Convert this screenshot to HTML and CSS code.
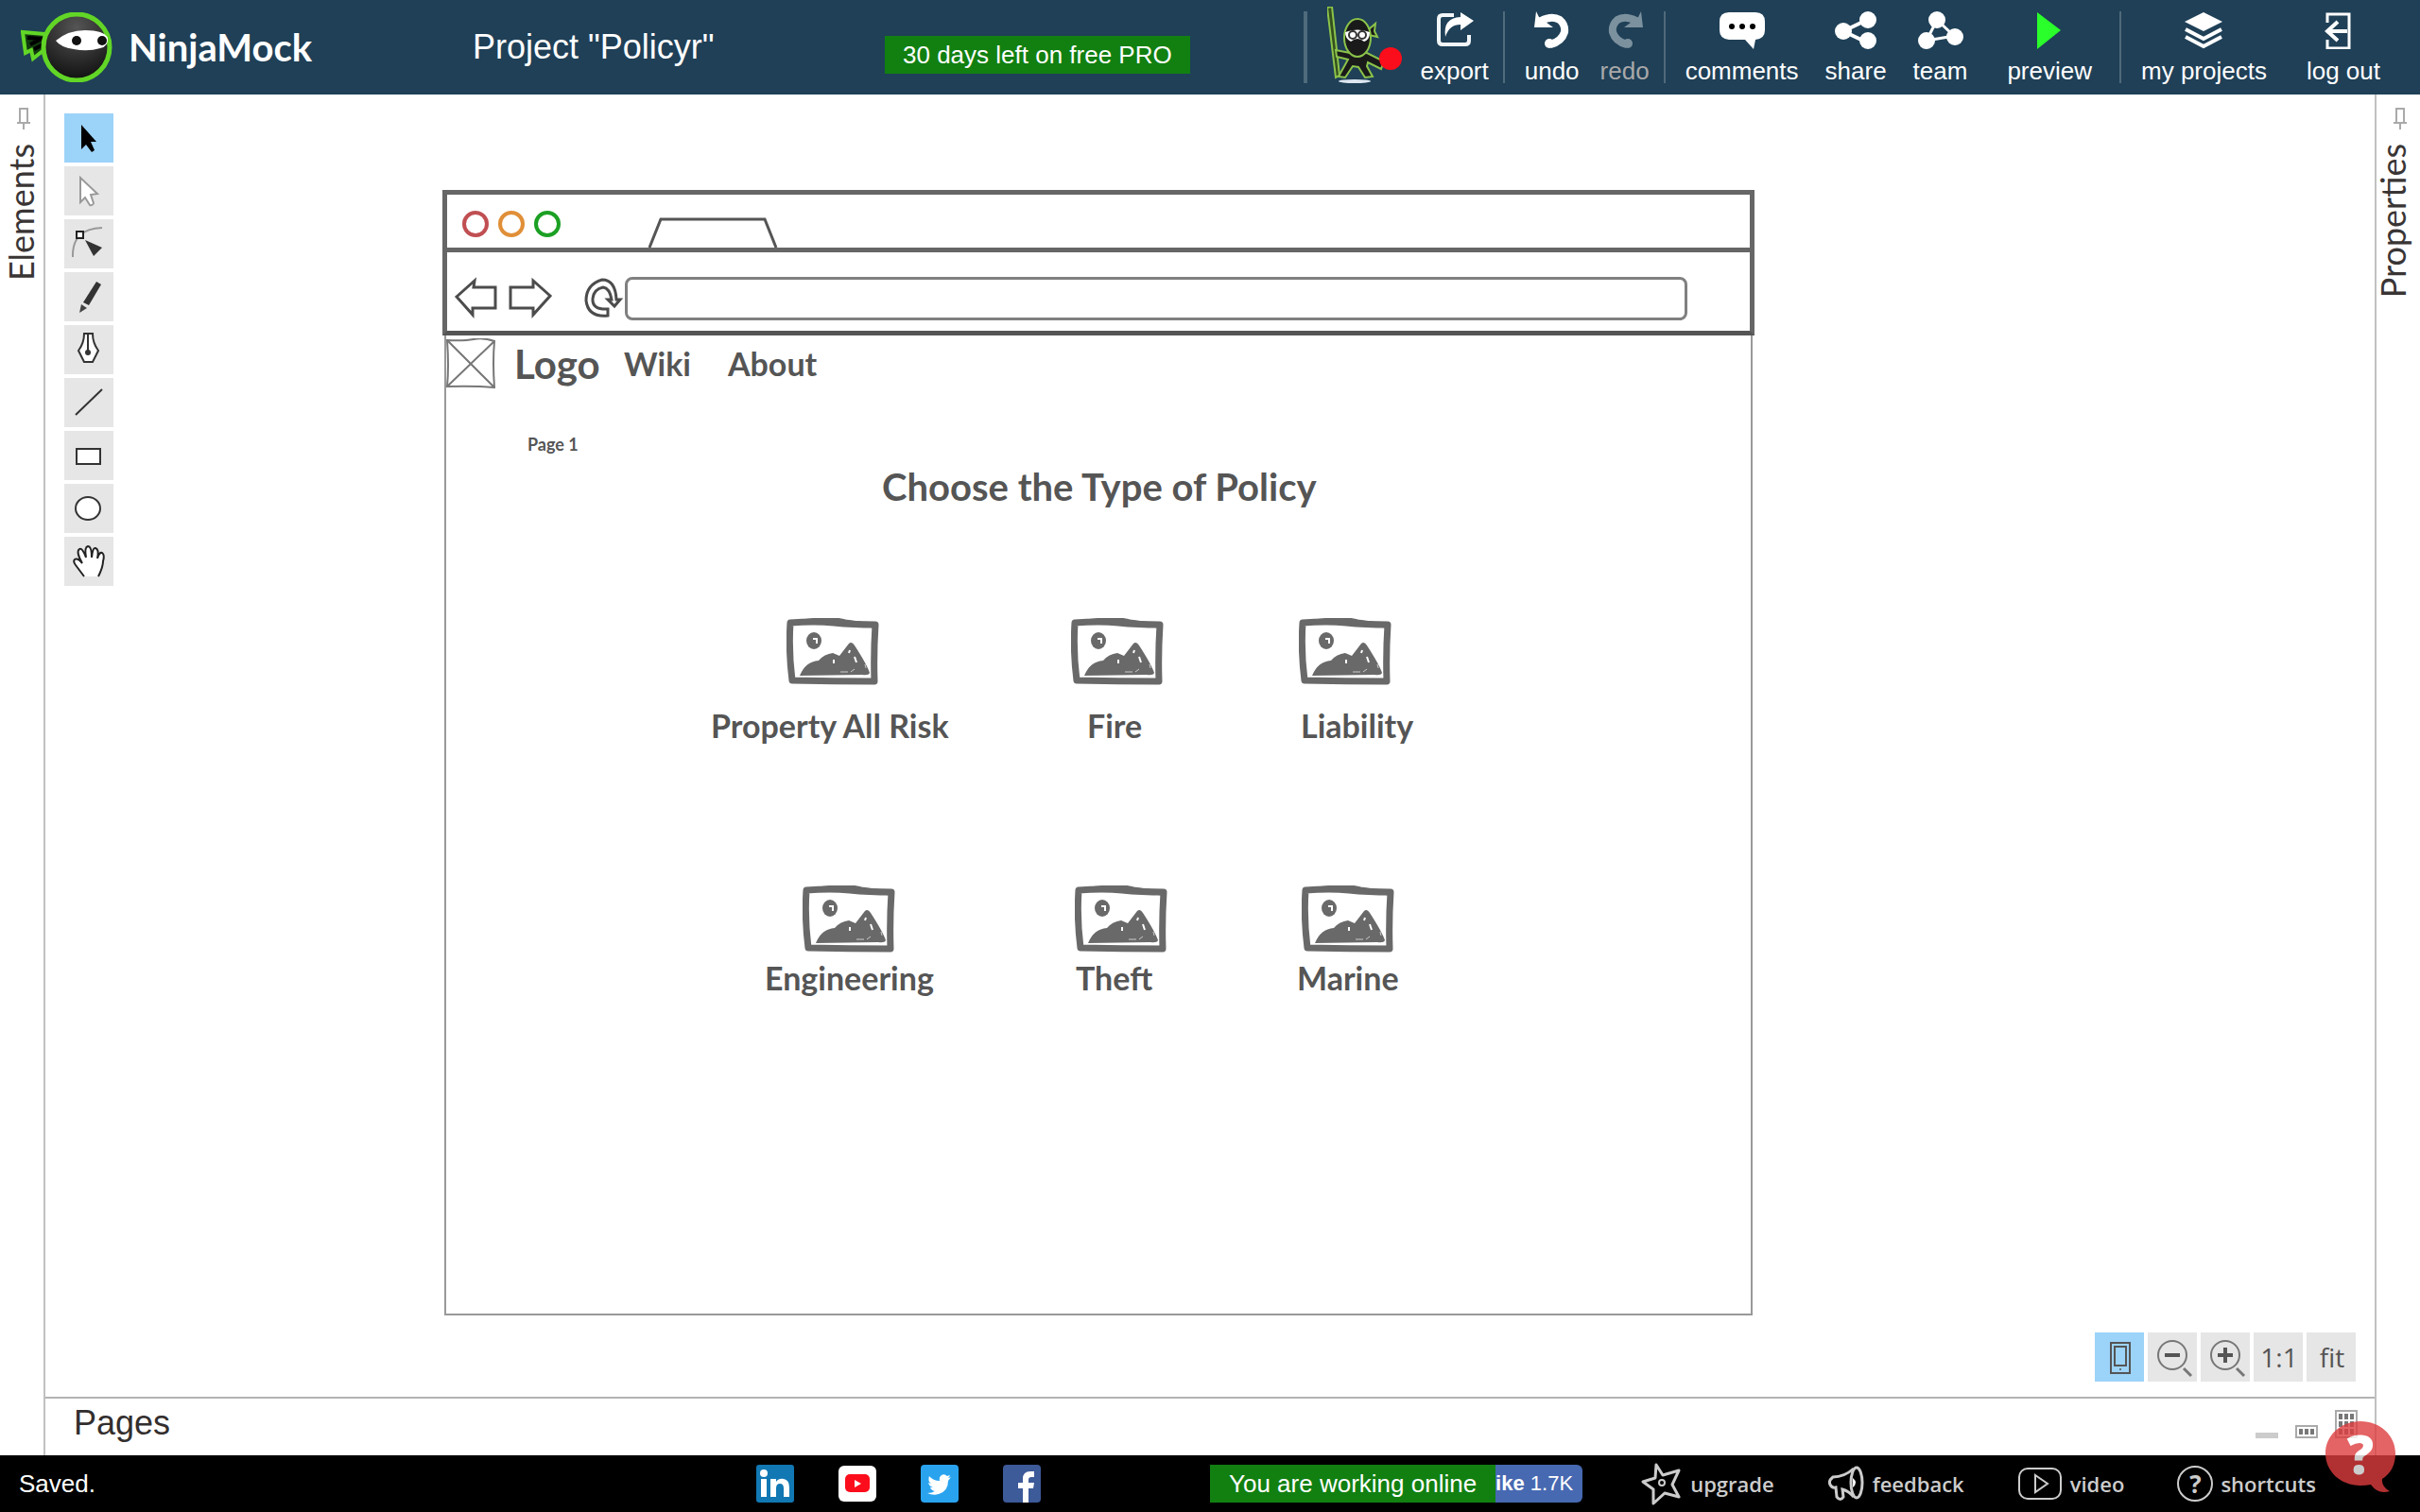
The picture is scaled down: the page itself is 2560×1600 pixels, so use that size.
FILE: index.html
```html
<!DOCTYPE html>
<html lang="en">
<head>
<meta charset="utf-8">
<title>NinjaMock - Policyr</title>
<link rel="stylesheet" href="styles.css">
</head>
<body>
<svg class="defs" aria-hidden="true">
  <symbol id="picture" viewBox="0 0 98 72">
    <path d="M4 5Q30 3 50 5T94 7Q92 38 93 67Q50 67 6 66Q2 35 4 5Z" fill="none" stroke="#696969" stroke-width="7" stroke-linejoin="round"/>
    <path d="M10 5Q46 -1 62 4L92 8" fill="none" stroke="#696969" stroke-width="5"/>
    <ellipse cx="29" cy="24" rx="8" ry="9" fill="#696969"/>
    <path d="M28 22h4v5" fill="none" stroke="#fff" stroke-width="2"/>
    <path d="M14 61Q20 46 34 45Q40 38 49 37L56 40L66 27Q69 24 72 29Q85 49 88 58Q87 61 80 60Z" fill="#696969"/>
    <path d="M72 41l2 6M50 44v4M67 34l-1 3" stroke="#fff" stroke-width="2" fill="none"/>
    <path d="M57 57h8M68 57l4-3M83 49l1 4" stroke="#ccc" stroke-width="1" fill="none"/>
  </symbol>
  <symbol id="pin" viewBox="0 0 16 24"><path d="M4 1h8v15H4zM1 16h14M8 16v7" fill="none" stroke="#aaa" stroke-width="2"/></symbol>
</svg>

<header class="topbar">
  <a class="brand" href="#">
    <svg class="brand-mark" viewBox="0 0 98 74">
      <defs><radialGradient id="hood" cx="50%" cy="20%" r="75%"><stop offset="0" stop-color="#555"/><stop offset="1" stop-color="#151515"/></radialGradient></defs>
      <path d="M25 23L2 21L5 43L11 40L13 49L28 37" fill="#123a10" stroke="#62d626" stroke-width="4"/>
      <path d="M7 27L22 28L10 34M14 39l10-5" stroke="#000" stroke-width="4" fill="none"/>
      <circle cx="59" cy="37" r="35" fill="url(#hood)" stroke="#62d626" stroke-width="5"/>
      <path d="M37 30Q50 19 68 19Q88 19 92 27Q93 36 84 38Q71 42 56 39Q42 37 37 30Z" fill="#fff"/>
      <circle cx="59" cy="30" r="5" fill="#111"/><circle cx="86" cy="30" r="5" fill="#111"/>
    </svg>
    <span class="brand-name">NinjaMock</span>
  </a>
  <h1 class="project">Project "Policyr"</h1>
  <button class="pro">30 days left on free PRO</button>
  <nav class="actions">
    <span class="rule rule-wide"></span>
    <a class="avatar" href="#" aria-label="profile">
      <svg viewBox="0 0 80 82" width="80" height="82">
        <path d="M0 1L5 0L13 73L9 75Z" fill="#34501f" stroke="#8bc34a" stroke-width="2"/>
        <path d="M44 24L51 18L50 26L53 32L44 30Z" fill="#1a1a1a" stroke="#8bc34a" stroke-width="2"/>
        <path d="M9 46L24 49L42 49L60 58L57 66L43 59L42 63L48 74L40 75L33 64L27 63L19 75L12 74L22 56L10 53Z" fill="#1a1a1a" stroke="#8bc34a" stroke-width="2"/>
        <ellipse cx="32" cy="33" rx="14" ry="20" fill="#1a1a1a" stroke="#8bc34a" stroke-width="2"/>
        <path d="M19 27Q32 22 45 27Q45 35 39 37Q32 31 25 37Q19 34 19 27Z" fill="#fff"/>
        <circle cx="27" cy="30" r="4" fill="#fff" stroke="#333" stroke-width="2"/><circle cx="37" cy="30" r="4" fill="#fff" stroke="#333" stroke-width="2"/>
        <ellipse cx="29" cy="79" rx="17" ry="2" fill="#dde6f0"/>
        <circle cx="67" cy="55" r="12" fill="#fc0d1b"/>
      </svg>
    </a>
    <button class="action"><svg viewBox="0 0 40 40"><path d="M19 4H7Q3 4 3 8V31Q3 35 7 35H31Q35 35 35 31V25" fill="none" stroke="#f2f6f8" stroke-width="4"/><path d="M26 1L40 10L26 20V14Q14 14 10 27Q7 7 26 6Z" fill="#fff"/></svg>export</button>
    <span class="rule"></span>
    <div class="group">
      <button class="action"><svg viewBox="0 0 40 40"><path d="M8 10Q20 4 28 9Q34 14 33 22Q30 32 18 35" fill="none" stroke="#fff" stroke-width="8"/><path d="M3 0L6 6L21 17L1 17Z" fill="#fff"/><circle cx="17" cy="34" r="5" fill="#fff"/></svg>undo</button>
      <button class="action off" disabled><svg viewBox="0 0 40 40"><path d="M32 10Q20 4 12 9Q6 14 7 22Q10 32 22 35" fill="none" stroke="#7c919e" stroke-width="8"/><path d="M37 0L34 6L19 17L39 17Z" fill="#7c919e"/><circle cx="23" cy="34" r="5" fill="#7c919e"/></svg>redo</button>
    </div>
    <span class="rule"></span>
    <div class="group wide">
      <button class="action"><svg class="w48" viewBox="0 0 48 40"><path d="M10 1H38Q48 1 48 11V20Q48 29 38 30L36 40L27 30H10Q0 29 0 20V11Q0 1 10 1Z" fill="#fff"/><circle cx="13" cy="16" r="3"/><circle cx="24" cy="16" r="3"/><circle cx="35" cy="16" r="3"/></svg>comments</button>
      <button class="action"><svg class="w48" viewBox="0 0 48 40"><path d="M11 21L36 9M11 21L36 33" stroke="#fff" stroke-width="4"/><circle cx="11" cy="21" r="9" fill="#fff"/><circle cx="37" cy="9" r="9" fill="#fff"/><circle cx="37" cy="31" r="9" fill="#fff"/></svg>share</button>
      <button class="action"><svg class="w48" viewBox="0 0 48 40"><path d="M20 9L9 31L38 26Z" stroke="#fff" stroke-width="3" fill="none"/><circle cx="20" cy="9" r="9" fill="#fff"/><circle cx="9" cy="31" r="9" fill="#fff"/><circle cx="39" cy="27" r="9" fill="#fff"/></svg>team</button>
      <button class="action preview"><svg viewBox="0 0 40 40"><path d="M7 1L32 20L7 40Z" fill="#2bff2b"/></svg>preview</button>
    </div>
    <span class="rule"></span>
    <div class="group far">
      <button class="action"><svg viewBox="0 0 40 40"><path d="M20 1L40 11L20 21L0 11Z" fill="#fff"/><path d="M1 19L20 29L39 19M1 27L20 37L39 27" fill="none" stroke="#fff" stroke-width="4"/></svg>my projects</button>
      <button class="action"><svg viewBox="0 0 40 40"><path d="M3 12V3H26V39H3V30" fill="none" stroke="#fff" stroke-width="3"/><path d="M24 21H3M14 11L3 21L14 31" fill="none" stroke="#fff" stroke-width="4"/></svg>log out</button>
    </div>
  </nav>
</header>

<main class="workspace">
  <aside class="rail rail-left">
    <svg class="pin"><use href="#pin"/></svg>
    <h2 class="rail-title">Elements</h2>
  </aside>

  <div class="center">
    <section class="canvas">
      <div class="tools">
        <button class="tool on" aria-label="select"><svg viewBox="0 0 52 52"><path d="M18 12L18 38L23 33L29 41L32 39L28 30L34 30Z"/></svg></button>
        <button class="tool" aria-label="direct select"><svg viewBox="0 0 52 52"><path d="M17 12L17 38L22 33L27 41Q30 42 31 39L28 30L35 29Z" fill="#fff" stroke="#999" stroke-width="2"/></svg></button>
        <button class="tool" aria-label="edit points"><svg viewBox="0 0 52 52"><path d="M9 40Q8 10 40 9" fill="none" stroke="#999" stroke-width="2"/><rect x="13" y="13" width="7" height="7" fill="#fff" stroke="#222" stroke-width="2"/><path d="M22 22L40 30L31 39Z" fill="#333"/></svg></button>
        <button class="tool" aria-label="pencil"><svg viewBox="0 0 52 52"><path d="M34 10L39 13L26 35L20 32Z" fill="#333"/><path d="M18 34L24 38L16 43Z" fill="#444"/></svg></button>
        <button class="tool" aria-label="pen"><svg viewBox="0 0 52 52"><path d="M21 9H30Q30 19 36 27L30 39H21L15 27Q21 19 21 9Z" fill="#fff" stroke="#333" stroke-width="2"/><path d="M25 9V28" stroke="#333" stroke-width="2"/><circle cx="25" cy="29" r="3" fill="#333"/></svg></button>
        <button class="tool" aria-label="line"><svg viewBox="0 0 52 52"><path d="M12 39L40 12" stroke="#333" stroke-width="2"/></svg></button>
        <button class="tool" aria-label="rectangle"><svg viewBox="0 0 52 52"><rect x="13" y="19" width="25" height="16" fill="#fff" stroke="#333" stroke-width="2"/></svg></button>
        <button class="tool" aria-label="ellipse"><svg viewBox="0 0 52 52"><ellipse cx="25" cy="26" rx="13" ry="12" fill="#fff" stroke="#333" stroke-width="2"/></svg></button>
        <button class="tool" aria-label="hand"><svg viewBox="0 0 52 52"><path d="M21 42L12 30Q9 26 11 24Q14 22 19 28Q12 16 16 13Q19 11 23 22Q21 11 25 10Q29 10 29 22Q30 11 33 12Q37 13 35 23Q37 16 40 17Q43 19 41 26Q41 32 36 42" fill="#fff" stroke="#222" stroke-width="2"/></svg></button>
      </div>

      <div class="board">
        <div class="chrome">
          <div class="chrome-tabs">
            <span class="dot red"></span><span class="dot amber"></span><span class="dot green"></span>
            <svg class="tab" viewBox="0 0 138 32"><path d="M2 32L14 2H124L136 32" fill="none" stroke="#555" stroke-width="3"/></svg>
          </div>
          <div class="chrome-bar">
            <svg class="nav-icons" viewBox="0 0 180 46"><g fill="none" stroke="#4c4c4c" stroke-width="3">
              <path d="M2 21L21 4L20 11H43V33H19V40Z"/>
              <path d="M59 11H83V4L101 20L83 40V33H59Z"/>
              <path d="M162 34Q145 35 146 23Q147 13 157 11Q164 12 166 24L162 24L169 31L175 24L171 24Q170 3 156 3Q139 8 139 25Q141 43 162 41Z"/>
            </g></svg>
            <input class="address" type="text" aria-label="address">
          </div>
        </div>
        <svg class="item logo-box" viewBox="0 0 54 54"><path d="M2 2Q20 3 30 1T52 3Q50 25 52 52Q30 50 2 51Q4 30 2 2ZM2 2L52 52M52 3L2 51" fill="none" stroke="#777" stroke-width="2"/></svg>
        <a class="item mark" href="#">Logo</a>
        <a class="item label wiki" href="#">Wiki</a>
        <a class="item label about" href="#">About</a>
        <span class="item page-name">Page 1</span>
        <h2 class="item headline">Choose the Type of Policy</h2>
        <svg class="item pic p1"><use href="#picture"/></svg><span class="item label l1">Property All Risk</span>
        <svg class="item pic p2"><use href="#picture"/></svg><span class="item label l2">Fire</span>
        <svg class="item pic p3"><use href="#picture"/></svg><span class="item label l3">Liability</span>
        <svg class="item pic p4"><use href="#picture"/></svg><span class="item label l4">Engineering</span>
        <svg class="item pic p5"><use href="#picture"/></svg><span class="item label l5">Theft</span>
        <svg class="item pic p6"><use href="#picture"/></svg><span class="item label l6">Marine</span>
      </div>

      <div class="zoom">
        <button class="tool on" aria-label="device frame"><svg viewBox="0 0 52 52"><g fill="none" stroke="#555" stroke-width="2"><rect x="17" y="11" width="20" height="32"/><rect x="21" y="15" width="12" height="20"/></g><circle cx="27" cy="39" r="1" fill="#555"/></svg></button>
        <button class="tool" aria-label="zoom out"><svg viewBox="0 0 52 52"><g fill="none" stroke="#777"><circle cx="26" cy="24" r="15" stroke-width="2"/><path d="M38 38L46 46" stroke-width="3"/><path d="M18 24h16" stroke="#555" stroke-width="4"/></g></svg></button>
        <button class="tool" aria-label="zoom in"><svg viewBox="0 0 52 52"><g fill="none" stroke="#777"><circle cx="26" cy="24" r="15" stroke-width="2"/><path d="M38 38L46 46" stroke-width="3"/><path d="M18 24h16M26 16v16" stroke="#555" stroke-width="4"/></g></svg></button>
        <button class="tool text">1:1</button>
        <button class="tool text">fit</button>
      </div>
    </section>

    <section class="pages">
      <h2 class="pages-title">Pages</h2>
      <div class="sizes">
        <button class="size" aria-label="collapse"><svg viewBox="0 0 24 30"><path d="M0 24h24v6H0z" fill="#ccc"/></svg></button>
        <button class="size" aria-label="one row"><svg viewBox="0 0 24 30"><path d="M1 17h22v12H1z" fill="none" stroke="#aaa" stroke-width="2"/><path d="M4 23h16" stroke="#777" stroke-width="6" stroke-dasharray="4 2"/></svg></button>
        <button class="size" aria-label="all rows"><svg viewBox="0 0 24 30"><path d="M1 1h22v28H1z" fill="none" stroke="#aaa" stroke-width="2"/><path d="M4 7h16M4 15h16M4 23h16" stroke="#777" stroke-width="6" stroke-dasharray="4 2"/></svg></button>
      </div>
    </section>
  </div>

  <aside class="rail rail-right">
    <svg class="pin"><use href="#pin"/></svg>
    <h2 class="rail-title">Properties</h2>
  </aside>
</main>

<footer class="footer">
  <span class="status">Saved.</span>
  <div class="social">
    <a href="#" aria-label="LinkedIn"><svg viewBox="0 0 40 40"><rect width="40" height="40" rx="3" fill="#1178b3"/><circle cx="8" cy="9" r="4" fill="#fff"/><path d="M5 15h6v19H5zM15 15h6v3Q24 14 29 15Q35 16 35 24V34H29V25Q29 20 25 20Q21 20 21 25V34H15z" fill="#fff"/></svg></a>
    <a href="#" aria-label="YouTube"><svg viewBox="0 0 40 40"><rect y="1" width="40" height="38" rx="6" fill="#fff"/><rect x="7" y="10" width="26" height="19" rx="5" fill="#fc0d1b"/><path d="M17 16L24 20L17 24Z" fill="#fff"/></svg></a>
    <a href="#" aria-label="Twitter"><svg viewBox="0 0 40 40"><rect width="40" height="40" rx="4" fill="#2aa3ef"/><path d="M32 13Q30 14 29 14Q31 12 31 11L28 12Q25 9 22 11Q19 13 20 17Q13 17 9 12Q7 17 11 20L8 19Q9 23 13 24H10Q11 27 15 28Q12 30 7 30Q13 33 19 31Q29 28 29 17Z" fill="#fff"/></svg></a>
    <a href="#" aria-label="Facebook"><svg viewBox="0 0 40 40"><rect width="40" height="40" rx="4" fill="#3d5a99"/><path d="M21 40V25H16V19H21V15Q21 7 29 7H33V13H30Q27 13 27 16V19H33L32 25H27V40Z" fill="#fff"/></svg></a>
  </div>
  <div class="online"><span class="online-text">You are working online</span><a class="like" href="#"><b>ike</b> 1.7K</a></div>
  <nav class="links">
    <a href="#"><svg width="44" height="46" viewBox="0 0 44 46"><path d="M16 3L23 14L40 9L33 24L40 37L25 33L13 44L13 29L2 21L15 17Z" fill="none" stroke="#ccc" stroke-width="3" stroke-linejoin="round"/><circle cx="22" cy="22" r="3" fill="none" stroke="#ccc" stroke-width="2"/></svg>upgrade</a>
    <a href="#"><svg width="40" height="38" viewBox="0 0 40 38"><path d="M28 3Q18 12 6 12Q1 16 3 20Q5 24 9 23L10 33Q14 38 17 33L16 25Q23 27 28 33" fill="none" stroke="#ccc" stroke-width="3"/><ellipse cx="31" cy="18" rx="6" ry="16" fill="none" stroke="#ccc" stroke-width="3"/><path d="M27 13Q33 18 27 23Z" fill="#fff"/></svg>feedback</a>
    <a href="#"><svg width="48" height="36" viewBox="0 0 48 36"><rect x="2" y="2" width="44" height="32" rx="9" fill="none" stroke="#ccc" stroke-width="2"/><path d="M19 9L32 18L19 27Z" fill="none" stroke="#ccc" stroke-width="2"/></svg>video</a>
    <a href="#"><span class="ring">?</span>shortcuts</a>
  </nav>
</footer>

<button class="help" aria-label="help"><svg class="help-shape" viewBox="0 0 74 76"><path d="M37 0C58 0 74 15 74 34Q74 52 60 61Q59 69 68 74Q56 78 48 67Q43 68 37 68C16 68 0 53 0 34S16 0 37 0Z" fill="#de3c3e"/></svg><span class="help-mark">?</span></button>
</body>
</html>
```
FILE: styles.css
```css
* { box-sizing: border-box; }

body {
  margin: 0;
  min-height: 100vh;
  display: flex;
  flex-direction: column;
  background: #fff;
  font-family: "Liberation Sans", Arial, sans-serif;
  font-size: 26px;
  line-height: 32px;
}

a { color: inherit; text-decoration: none; }
h1, h2 { margin: 0; font-weight: 400; }
button { padding: 0; border: 0; background: none; color: inherit; font: inherit; cursor: pointer; }
svg { display: block; flex: none; }
.defs { position: absolute; width: 0; height: 0; }

/* header */
.topbar {
  display: flex;
  align-items: center;
  height: 100px;
  padding: 0 42px 0 22px;
  background: #1f4057;
  color: #fff;
}
.brand { display: flex; align-items: center; gap: 16px; width: 478px; }
.brand-mark { width: 98px; height: 74px; }
.brand-name { font: 700 40px/48px Lato, sans-serif; }
.project { width: 436px; font-size: 36px; line-height: 44px; }
.pro { margin-top: 16px; padding: 0 19px; height: 40px; background: #118011; white-space: nowrap; }

.actions { display: flex; align-items: center; margin-left: auto; }
.rule { width: 2px; height: 76px; margin: 0 21px 0 15px; background: #4f6a7b; }
.rule-wide { width: 4px; margin-left: 0; }
.group { display: flex; gap: 22px; }
.group.wide { gap: 28px; }
.group.far { gap: 42px; }
.action { display: flex; flex-direction: column; align-items: center; gap: 7px; margin-top: 3px; white-space: nowrap; }
.action svg { width: 40px; height: 40px; }
.action .w48 { width: 48px; }
.action.off { color: #a9a9a9; }
.action.preview { margin-left: 14px; margin-right: 14px; }
.avatar { margin-right: 18px; }
.avatar svg { margin-top: -4px; }

/* workspace */
.workspace { flex: 1; display: flex; }
.rail { display: flex; flex-direction: column; align-items: center; gap: 14px; padding-top: 14px; width: 48px; }
.rail-left { padding-right: 2px; border-right: 2px solid #c1c1c1; }
.rail-right { padding-right: 12px; border-left: 2px solid #c1c1c1; }
.pin { width: 16px; height: 24px; margin-left: 6px; }
.rail-right .pin { margin-left: 16px; }
.rail-title {
  font: 400 36px/44px Lato, sans-serif;
  color: #3a3535;
  writing-mode: vertical-rl;
  transform: rotate(180deg);
}
.center { flex: 1; display: flex; flex-direction: column; }
.canvas { flex: 1; position: relative; padding: 20px; }

.tools { display: inline-flex; flex-direction: column; gap: 4px; }
.tool { width: 52px; height: 52px; background: #e6e6e6; }
.tool.on { background: #9cd3f9; }
.tool svg { width: 52px; height: 52px; }
.tool.text { padding-left: 2px; font: 400 28px/52px "Open Sans", sans-serif; color: #555; }
.zoom { position: absolute; right: 20px; bottom: 16px; display: flex; gap: 4px; }

/* wireframe on the canvas */
.board {
  position: absolute;
  left: 420px;
  top: 101px;
  width: 1388px;
  height: 1191px;
  font-family: Lato, sans-serif;
  font-weight: 700;
  color: #555;
}
.board::before {
  content: "";
  position: absolute;
  inset: 150px 2px 0;
  border: 2px solid #999;
}
.chrome { position: relative; border: 5px solid #666; border-bottom-color: #555; background: #fff; }
.chrome-tabs { display: flex; gap: 10px; height: 61px; padding: 17px 16px 0; border-bottom: 5px solid #666; }
.dot { width: 28px; height: 28px; border: 4px solid; border-radius: 50%; }
.red { color: #c04f52; }
.amber { color: #e08f38; }
.green { color: #1ca024; }
.tab { align-self: flex-end; width: 138px; height: 32px; margin-left: 82px; }
.chrome-bar { display: flex; align-items: center; height: 83px; padding: 20px 66px 6px 8px; }
.nav-icons { width: 180px; height: 46px; }
.address { flex: 1; height: 46px; border: 3px solid #808080; border-radius: 8px; background: #fff; font: inherit; }

.item { position: absolute; white-space: nowrap; }
.logo-box { left: 3px; top: 157px; width: 54px; height: 54px; }
.mark { left: 76px; top: 159px; font-size: 42px; line-height: 50px; }
.label { font-size: 34px; line-height: 44px; }
.page-name { left: 90px; top: 255px; font-size: 18px; line-height: 28px; }
.headline { left: 465px; top: 289px; font-weight: 700; font-size: 40px; line-height: 50px; }
.wiki { left: 192px; top: 162px; }
.about { left: 302px; top: 162px; }
.pic { width: 98px; height: 72px; }
.p1 { left: 364px; top: 453px; }
.p2 { left: 665px; top: 453px; }
.p3 { left: 906px; top: 453px; }
.p4 { left: 381px; top: 736px; }
.p5 { left: 669px; top: 736px; }
.p6 { left: 909px; top: 736px; }
.l1 { left: 284px; top: 545px; }
.l2 { left: 682px; top: 545px; }
.l3 { left: 908px; top: 545px; }
.l4 { left: 341px; top: 812px; }
.l5 { left: 670px; top: 812px; }
.l6 { left: 904px; top: 812px; }

/* pages strip */
.pages {
  display: flex;
  justify-content: space-between;
  height: 62px;
  padding: 5px 18px 0 30px;
  border-top: 2px solid #b3b3b3;
}
.pages-title { font-size: 36px; line-height: 42px; color: #332e2e; }
.sizes { display: flex; gap: 18px; padding-top: 7px; }
.size { width: 24px; height: 30px; }

/* footer */
.footer {
  display: flex;
  align-items: center;
  height: 60px;
  padding: 0 110px 0 20px;
  background: #000;
  color: #fff;
}
.status { width: 780px; }
.social { display: flex; gap: 47px; width: 480px; }
.social svg { width: 40px; height: 40px; }
.online { display: flex; line-height: 40px; white-space: nowrap; }
.online-text { padding: 0 20px; background: #118011; }
.like { padding-right: 10px; font-size: 22px; background: #4769b1; border-radius: 0 6px 6px 0; }
.links { display: flex; align-items: center; gap: 56px; margin-left: auto; font: 600 22px/32px "Open Sans", sans-serif; color: #ccc; }
.links a { display: flex; align-items: center; gap: 8px; }
.ring { width: 38px; height: 38px; border: 2px solid #ccc; border-radius: 50%; font-weight: 700; font-size: 26px; line-height: 34px; text-align: center; }

.help { position: fixed; right: 26px; bottom: 20px; width: 74px; height: 76px; opacity: .8; color: #fff; }
.help-shape { width: 74px; height: 76px; }
.help-mark { position: absolute; inset: 0; font: 800 56px/68px "Open Sans", sans-serif; text-align: center; }
```
